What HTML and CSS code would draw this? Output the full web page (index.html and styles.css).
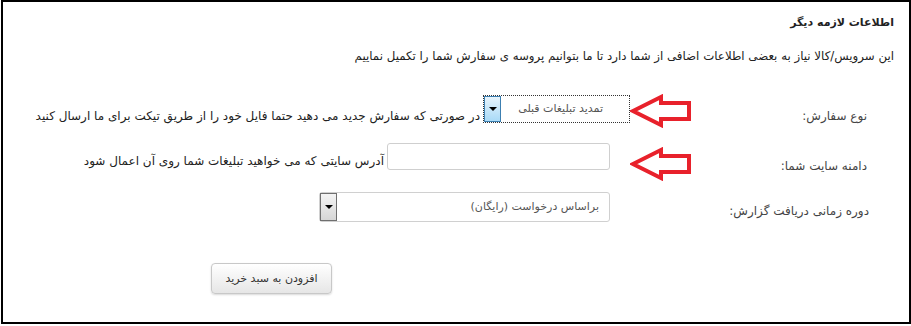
FILE: index.html
```html
<!DOCTYPE html>
<html lang="fa" dir="rtl">
<head>
    <meta charset="UTF-8">
    <title>اطلاعات لازمه دیگر</title>
    <link rel="stylesheet" href="styles.css">
</head>
<body>

    <div class="box">
        <h3 class="title">اطلاعات لازمه دیگر</h3>
        <p class="intro">این سرویس/کالا نیاز به بعضی اطلاعات اضافی از شما دارد تا ما بتوانیم پروسه ی سفارش شما را تکمیل نماییم</p>

        <!-- order type -->
        <div class="row row-type">
            <div class="lbl">نوع سفارش:</div>
            <div class="field">
                <div class="select select-focus">
                    <span class="sel-text">تمدید تبلیغات قبلی</span>
                    <span class="sel-btn blue"><i></i></span>
                </div>
                <span class="hint">در صورتی که سفارش جدید می دهید حتما فایل خود را از طریق تیکت برای ما ارسال کنید</span>
            </div>
        </div>

        <!-- domain -->
        <div class="row row-domain">
            <div class="lbl">دامنه سایت شما:</div>
            <div class="field">
                <input type="text" class="txt">
                <span class="hint">آدرس سایتی که می خواهید تبلیغات شما روی آن اعمال شود</span>
            </div>
        </div>

        <!-- report period -->
        <div class="row row-report">
            <div class="lbl">دوره زمانی دریافت گزارش:</div>
            <div class="field">
                <div class="select select-wide">
                    <span class="sel-text">براساس درخواست (رایگان)</span>
                    <span class="sel-btn"><i></i></span>
                </div>
            </div>
        </div>

        <div class="actions">
            <button class="add-btn">افزودن به سبد خرید</button>
        </div>

        <!-- red annotation arrows -->
        <svg class="arrow arrow-1" width="62" height="34" viewBox="0 0 62 34">
            <path d="M3 17 L31 3 L31 9 L59 9 L59 25 L31 25 L31 31 Z" fill="#fff" stroke="#e8212b" stroke-width="4"/>
        </svg>
        <svg class="arrow arrow-2" width="62" height="34" viewBox="0 0 62 34">
            <path d="M3 17 L31 3 L31 9 L59 9 L59 25 L31 25 L31 31 Z" fill="#fff" stroke="#e8212b" stroke-width="4"/>
        </svg>
    </div>

</body>
</html>
```

FILE: styles.css
```css
body {
    margin: 0;
    background-color: #fff;
    font-family: "DejaVu Sans", sans-serif;
    font-size: 12px;
    color: #222;
}

.box {
    position: relative;
    width: 906px;
    height: 320px;
    border: 2px solid #000;
}

.title {
    margin: 0;
    padding: 14px 15px 0 0;
    font-size: 11px;
    font-weight: bold;
    color: #222;
}

.intro {
    margin: 20px 15px 0 0;
    font-size: 11.8px;
}

.row {
    display: flex;
    align-items: flex-start;
}

.lbl {
    width: 237px;
    padding-right: 42px;
    color: #444;
}

.field {
    display: flex;
    align-items: flex-end;
}

.hint {
    margin-right: 3px;
}

.row-type {
    margin-top: 32px;
}

.row-type .lbl {
    padding-top: 14px;
}

.row-type .field {
    margin-top: 0;
}

.row-domain {
    margin-top: 20px;
}

.row-domain .lbl {
    padding-top: 16px;
}

.row-domain .field {
    margin-right: 20px;
}

.row-domain .hint {
    margin-bottom: 2px;
}

.row-report {
    margin-top: 19px;
}

.row-report .lbl {
    padding-top: 12px;
    width: 239px;
    padding-right: 40px;
}

.row-report .field {
    margin-right: 20px;
}

/* fake selects */
.select {
    display: flex;
    align-items: stretch;
    height: 28px;
    box-sizing: border-box;
    background: #fff;
}

.select-focus {
    width: 147px;
    border: 1px dotted #333;
}

.select-wide {
    width: 291px;
    height: 30px;
    border: 1px solid #d0d0d0;
    border-radius: 3px;
}

.sel-text {
    flex: 1;
    padding-right: 26px;
    line-height: 26px;
    color: #555;
    font-size: 11px;
}

.select-wide .sel-text {
    line-height: 28px;
    padding-right: 10px;
}

.sel-btn {
    width: 15px;
    display: flex;
    align-items: center;
    justify-content: center;
    border: 1px solid #6f6f6f;
    background: linear-gradient(#f4f4f4, #d6d6d6);
}

.sel-btn.blue {
    border-color: #3c7fb1;
    background: linear-gradient(#e7f4fc, #a9daf7);
}

.sel-btn i {
    width: 0;
    height: 0;
    border-left: 4px solid transparent;
    border-right: 4px solid transparent;
    border-top: 4px solid #000;
}

.txt {
    width: 223px;
    height: 27px;
    box-sizing: border-box;
    border: 1px solid #cfcfcf;
    border-radius: 3px;
    margin: 0;
}

.actions {
    margin-top: 41px;
    padding-right: 577px;
}

.add-btn {
    width: 121px;
    height: 31px;
    font-family: "DejaVu Sans", sans-serif;
    font-size: 11px;
    color: #333;
    border: 1px solid #c8c8c8;
    border-radius: 4px;
    background: linear-gradient(#ffffff, #e6e6e6);
    box-shadow: 0 1px 2px rgba(0, 0, 0, 0.15);
    cursor: pointer;
}

.arrow {
    position: absolute;
}

.arrow-1 {
    top: 92px;
    left: 627px;
}

.arrow-2 {
    top: 145px;
    left: 627px;
}
```
